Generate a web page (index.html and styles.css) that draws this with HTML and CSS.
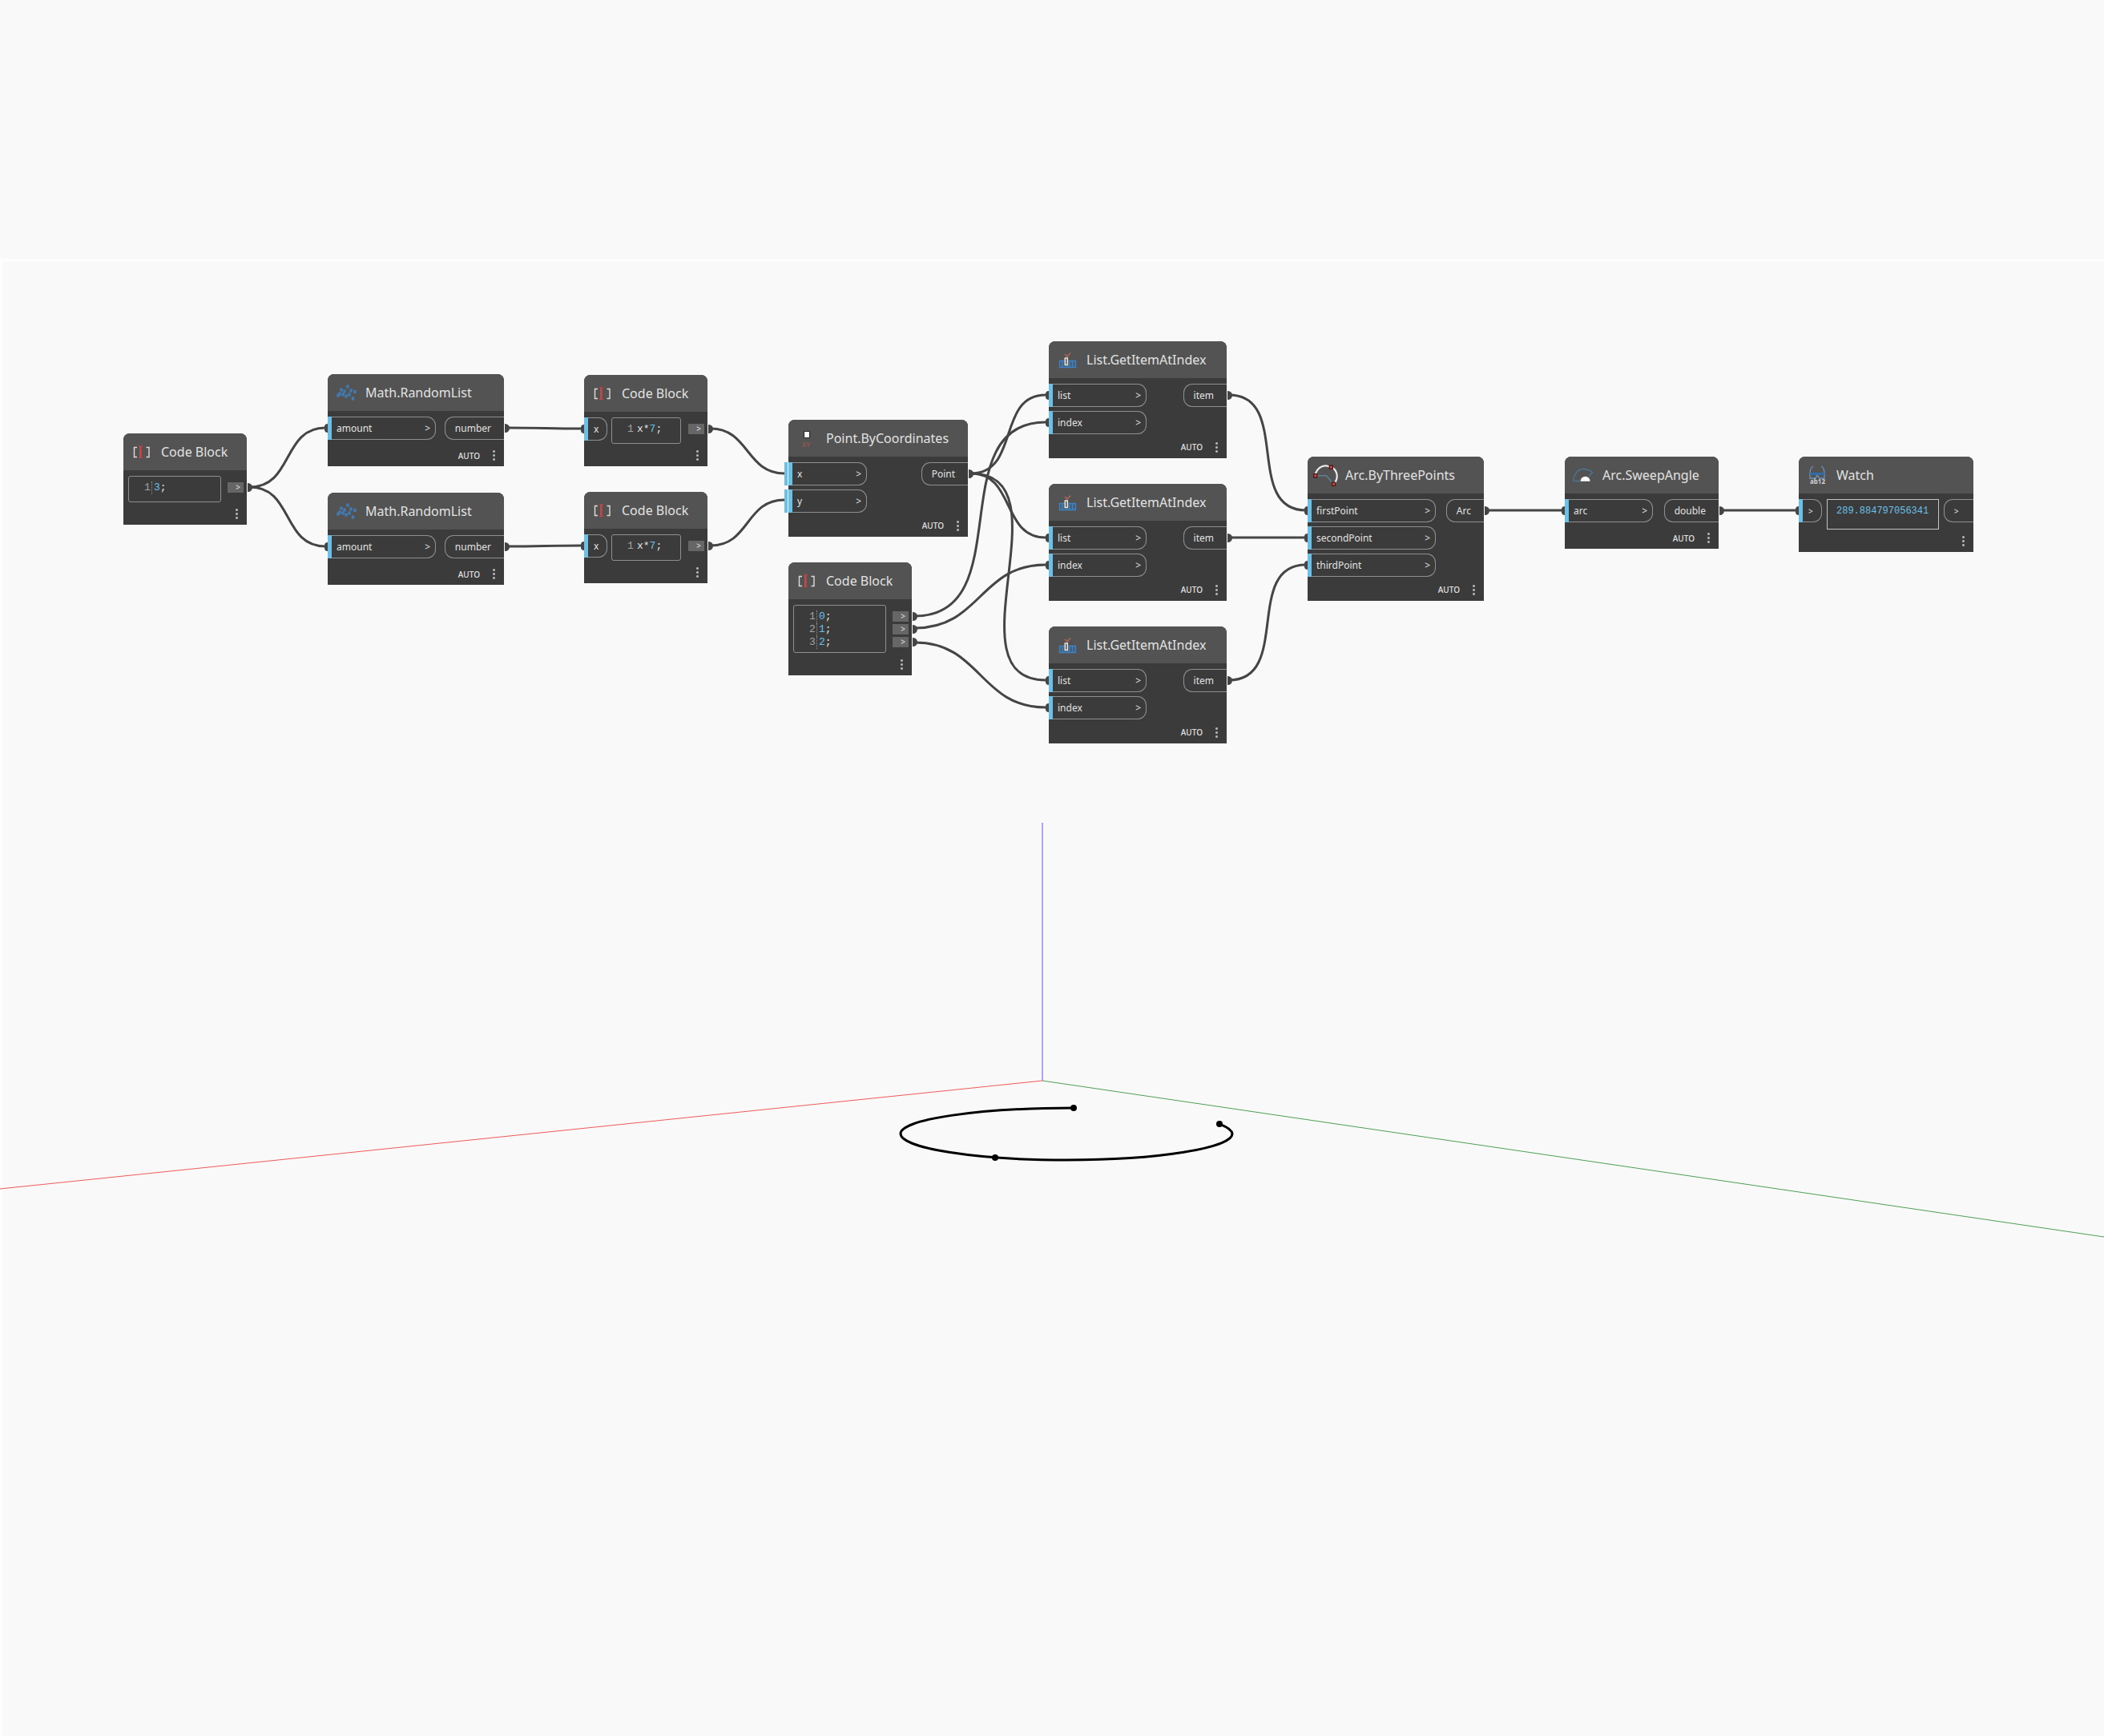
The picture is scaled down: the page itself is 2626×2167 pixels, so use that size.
FILE: index.html
```html
<!DOCTYPE html>
<html lang="en">
<head>
<meta charset="utf-8">
<title>Arc.SweepAngle graph</title>
<link rel="stylesheet" href="styles.css">
</head>
<body>
<svg class="symbols" aria-hidden="true">
  <symbol id="i-code" viewBox="0 0 32 32">
    <path d="M10 10.500H6.500v12H10M21.500 10.500h3.500v12h-3.500" fill="none" stroke="#dcdcdc" stroke-width="1.400"/>
    <path d="M11.500 8.700h5.500M11.500 23.500h5.500" stroke="#b84444" stroke-width="1"/>
    <path d="M14.300 9v14.500" stroke="#d04545" stroke-width="2.400"/>
  </symbol>
  <symbol id="i-random" viewBox="0 0 32 32">
    <path d="M17 7h2v3h-2zM9 11h2v3H9zM13 13h2v3h-2zM5 18h2v3H5zM7 16h2v3H7zM11 17h2v3h-2zM15 19h2v3h-2zM19 17h2v3h-2zM21 12h2v3h-2zM26 13.500h2v3h-2zM23.500 22h2v3h-2z" fill="#46627e" stroke="#3f83c4" stroke-width="1.200"/>
  </symbol>
  <symbol id="i-list" viewBox="0 0 32 32">
    <path d="M6.500 17.500h20v8h-20zM10 17.500v8M18.500 17.500v8M22.500 17.500v8" fill="#44607c" stroke="#3f83c4" stroke-width="1.300"/>
    <path d="M13.300 14h3v8.500h-3z" fill="#535353" stroke="#ece4d8" stroke-width="1.500"/>
    <path d="M13 9l3 3 4-4.500" fill="none" stroke="#b0645f" stroke-width="1.600"/>
  </symbol>
  <symbol id="i-arc3" viewBox="0 0 32 32">
    <path d="M2.500 16.500C4 8 11 3.500 17 4.500l5 1.500C30 9 32.500 19 26 27" fill="none" stroke="#ececec" stroke-width="2.200"/>
    <path d="M2.500 16.700h14L25 27" fill="none" stroke="#5d8193" stroke-width="1.500"/>
    <path d="M.7 14.700h4v4h-4zM20.300 4.300h4v4h-4zM23.500 25.300h4v4h-4z" fill="#c45a5a" stroke="#5c1515" stroke-width="1.400"/>
  </symbol>
  <symbol id="i-sweep" viewBox="0 0 32 32">
    <path d="M3.500 23.500C4 14 10 8.500 16 8.500c5 0 8 1.500 11.500 4L23 18M3.500 23.500h9" fill="none" stroke="#4b7396" stroke-width="1.500"/>
    <path d="M12.600 23.800a6 6 0 0 1 12 0z" fill="#fff"/>
  </symbol>
</svg>

<main class="workspace">
  <svg class="scene" role="img" aria-label="3D preview: arc through three points">
    <path class="axis-z" d="M1301 1027V1349"/>
    <path class="axis-x" d="M0 1484L1301 1349"/>
    <path class="axis-y" d="M1301 1349L2626 1544"/>
    <path class="arc" d="M1340 1383A216 32 0 0 0 1124 1415A207 33 0 0 0 1331 1448A207 33 0 0 0 1538 1415A207 33 0 0 0 1522 1403"/>
    <circle cx="1340" cy="1383" r="4"/><circle cx="1242" cy="1445" r="4"/><circle cx="1522" cy="1403" r="4"/>
  </svg>
  <svg class="wires" aria-hidden="true">
    <path d="M312 608C366 608 352 534 406 534"/>
    <path d="M312 608C366 608 352 682 406 682"/>
    <path d="M633 534C675 534 685 535 727 535"/>
    <path d="M633 682C675 682 685 681 727 681"/>
    <path d="M887 535C935 535 931 591 979 591"/>
    <path d="M887 681C936 681 930 624 979 624"/>
    <path d="M1212 591C1273 591 1244 493 1305 493"/>
    <path d="M1212 591C1267 591 1250 671 1305 671"/>
    <path d="M1212 591C1335 591 1182 849 1305 849"/>
    <path d="M1142 769C1273 769 1174 527 1305 527"/>
    <path d="M1142 784C1224 784 1223 705 1305 705"/>
    <path d="M1142 802C1224 802 1223 883 1305 883"/>
    <path d="M1534 493C1612 493 1552 637 1630 637"/>
    <path d="M1534 671H1630"/>
    <path d="M1534 849C1612 849 1552 705 1630 705"/>
    <path d="M1856 637H1950"/>
    <path d="M2148 637H2243"/>
  </svg>

  <article class="node code" style="left:154px;top:541px;width:154px">
    <header><svg><use href="#i-code"/></svg><h2>Code Block</h2></header>
    <div class="body">
      <pre class="editor ruled"><code><i>1</i><span><b>3</b>;</span></code></pre>
      <div class="outs"><button class="tag wired">&gt;</button></div>
    </div>
    <footer><button class="menu" aria-label="Node menu"></button></footer>
  </article>

  <article class="node" style="left:409px;top:467px;width:220px">
    <header><svg><use href="#i-random"/></svg><h2>Math.RandomList</h2></header>
    <div class="body">
      <div class="ins wide"><div class="in wired">amount<span>&gt;</span></div></div>
      <div class="out wired">number</div>
    </div>
    <footer><span>AUTO</span><button class="menu" aria-label="Node menu"></button></footer>
  </article>

  <article class="node" style="left:409px;top:615px;width:220px">
    <header><svg><use href="#i-random"/></svg><h2>Math.RandomList</h2></header>
    <div class="body">
      <div class="ins wide"><div class="in wired">amount<span>&gt;</span></div></div>
      <div class="out wired">number</div>
    </div>
    <footer><span>AUTO</span><button class="menu" aria-label="Node menu"></button></footer>
  </article>

  <article class="node code" style="left:729px;top:468px;width:154px">
    <header><svg><use href="#i-code"/></svg><h2>Code Block</h2></header>
    <div class="body">
      <div class="ins"><div class="in mini wired">x</div></div>
      <pre class="editor"><code><i>1</i><span>x*<b>7</b>;</span></code></pre>
      <div class="outs"><button class="tag wired">&gt;</button></div>
    </div>
    <footer><button class="menu" aria-label="Node menu"></button></footer>
  </article>

  <article class="node code" style="left:729px;top:614px;width:154px">
    <header><svg><use href="#i-code"/></svg><h2>Code Block</h2></header>
    <div class="body">
      <div class="ins"><div class="in mini wired">x</div></div>
      <pre class="editor"><code><i>1</i><span>x*<b>7</b>;</span></code></pre>
      <div class="outs"><button class="tag wired">&gt;</button></div>
    </div>
    <footer><button class="menu" aria-label="Node menu"></button></footer>
  </article>

  <article class="node multi" style="left:984px;top:524px;width:224px">
    <header>
      <svg viewBox="0 0 32 32" aria-hidden="true">
        <path d="M12.500 7.500h7v8h-7z" fill="#fff" stroke="#2b2b2b" stroke-width="1.200"/>
        <text x="10" y="27" class="icon-xy">XY</text>
      </svg>
      <h2>Point.ByCoordinates</h2>
    </header>
    <div class="body">
      <div class="ins narrow"><div class="in default">x<span>&gt;</span></div><div class="in default">y<span>&gt;</span></div></div>
      <div class="out wired">Point</div>
    </div>
    <footer><span>AUTO</span><button class="menu" aria-label="Node menu"></button></footer>
  </article>

  <article class="node code" style="left:984px;top:702px;width:154px">
    <header><svg><use href="#i-code"/></svg><h2>Code Block</h2></header>
    <div class="body">
      <pre class="editor ruled"><code><i>1</i><span><b>0</b>;</span><i>2</i><span><b>1</b>;</span><i>3</i><span><b>2</b>;</span></code></pre>
      <div class="outs"><button class="tag wired">&gt;</button><button class="tag wired">&gt;</button><button class="tag wired">&gt;</button></div>
    </div>
    <footer><button class="menu" aria-label="Node menu"></button></footer>
  </article>

  <article class="node multi" style="left:1309px;top:426px;width:222px">
    <header><svg><use href="#i-list"/></svg><h2>List.GetItemAtIndex</h2></header>
    <div class="body">
      <div class="ins medium"><div class="in wired">list<span>&gt;</span></div><div class="in wired">index<span>&gt;</span></div></div>
      <div class="out wired">item</div>
    </div>
    <footer><span>AUTO</span><button class="menu" aria-label="Node menu"></button></footer>
  </article>

  <article class="node multi" style="left:1309px;top:604px;width:222px">
    <header><svg><use href="#i-list"/></svg><h2>List.GetItemAtIndex</h2></header>
    <div class="body">
      <div class="ins medium"><div class="in wired">list<span>&gt;</span></div><div class="in wired">index<span>&gt;</span></div></div>
      <div class="out wired">item</div>
    </div>
    <footer><span>AUTO</span><button class="menu" aria-label="Node menu"></button></footer>
  </article>

  <article class="node multi" style="left:1309px;top:782px;width:222px">
    <header><svg><use href="#i-list"/></svg><h2>List.GetItemAtIndex</h2></header>
    <div class="body">
      <div class="ins medium"><div class="in wired">list<span>&gt;</span></div><div class="in wired">index<span>&gt;</span></div></div>
      <div class="out wired">item</div>
    </div>
    <footer><span>AUTO</span><button class="menu" aria-label="Node menu"></button></footer>
  </article>

  <article class="node multi" style="left:1632px;top:570px;width:220px">
    <header><svg><use href="#i-arc3"/></svg><h2>Arc.ByThreePoints</h2></header>
    <div class="body">
      <div class="ins widest"><div class="in wired">firstPoint<span>&gt;</span></div><div class="in wired">secondPoint<span>&gt;</span></div><div class="in wired">thirdPoint<span>&gt;</span></div></div>
      <div class="out wired">Arc</div>
    </div>
    <footer><span>AUTO</span><button class="menu" aria-label="Node menu"></button></footer>
  </article>

  <article class="node" style="left:1953px;top:570px;width:192px">
    <header><svg><use href="#i-sweep"/></svg><h2>Arc.SweepAngle</h2></header>
    <div class="body">
      <div class="ins short"><div class="in wired">arc<span>&gt;</span></div></div>
      <div class="out wired">double</div>
    </div>
    <footer><span>AUTO</span><button class="menu" aria-label="Node menu"></button></footer>
  </article>

  <article class="node watch" style="left:2245px;top:570px;width:218px">
    <header>
      <svg viewBox="0 0 32 32" aria-hidden="true">
        <path d="M11 5c-2 1-4 5-4 10v5h7l2-4 3 4h6v-5c0-5-1-9-4-10" fill="none" stroke="#6f94b5" stroke-width="1.300"/>
        <path d="M7 13h18v3H7z" fill="#2f6ea8"/>
        <text x="7" y="27" class="icon-ab">ab12</text>
      </svg>
      <h2>Watch</h2>
    </header>
    <div class="body">
      <div class="ins"><div class="in mini wired"><span>&gt;</span></div></div>
      <output>289.884797056341</output>
      <div class="out"><span>&gt;</span></div>
    </div>
    <footer><button class="menu" aria-label="Node menu"></button></footer>
  </article>
</main>
</body>
</html>
```

FILE: styles.css
```css
* { box-sizing: border-box; }

body {
  margin: 0;
  min-height: 100vh;
  padding-top: 323px;
  background: #f9f9f9;
  font-family: "Noto Sans", "Open Sans", sans-serif;
  color: #e2e2e2;
}

.symbols { position: absolute; width: 0; height: 0; }
.icon-xy { font: bold 8px "Noto Sans", sans-serif; fill: #8f5454; }
.icon-ab { font: bold 8px "Noto Sans", sans-serif; fill: #d0d0d0; }

.workspace {
  min-height: calc(100vh - 323px);
  border-top: 4px solid #fdfdfd;
  border-left: 3px solid #fdfdfd;
}

.scene, .wires {
  position: absolute;
  top: 0;
  left: 0;
  width: 100%;
  height: 100%;
}
.scene path { fill: none; }
.scene .axis-x { stroke: #f05a5a; stroke-width: 1; }
.scene .axis-y { stroke: #4f9f55; stroke-width: 1; }
.scene .axis-z { stroke: #aba6f5; stroke-width: 2; }
.scene .arc { stroke: #000; stroke-width: 3; }
.wires path { fill: none; stroke: #454545; stroke-width: 3; }

.node {
  position: absolute;
  background: #3b3b3b;
  border-radius: 8px 8px 0 0;
}
.node header {
  display: flex;
  align-items: center;
  gap: 8px;
  height: 46px;
  padding-left: 7px;
  background: #535353;
  border-radius: 8px 8px 0 0;
}
.node header svg { width: 32px; height: 32px; flex: none; }
.node h2 {
  margin: 0;
  font-size: 16px;
  font-weight: 400;
  line-height: 24px;
  white-space: nowrap;
}

.body {
  display: flex;
  justify-content: space-between;
  align-items: flex-start;
  padding-top: 7px;
}
.ins { display: grid; gap: 5px; }
.wide { width: 135px; }
.widest { width: 160px; }
.medium { width: 122px; }
.short { width: 110px; }
.narrow { width: 98px; }

.in, .out {
  position: relative;
  display: flex;
  align-items: center;
  height: 29px;
  border: 1px solid #8f8f8f;
  font-size: 12px;
  line-height: 16px;
}
.in {
  justify-content: space-between;
  padding: 0 6px;
  border-left: 5px solid #6ac0e7;
  border-radius: 0 11px 11px 0;
}
.in::after, .default::before {
  content: "";
  position: absolute;
  top: -1px;
  bottom: -1px;
  left: -5px;
  width: 5px;
  background: #6ac0e7;
}
.default::before { left: -10px; width: 4px; }
.out {
  padding: 0 16px 0 12px;
  border-right: 0;
  border-radius: 11px 0 0 11px;
}
.mini { width: 29px; padding: 0 7px; }

.in.wired::before, .out.wired::after, .tag.wired::after {
  content: "";
  position: absolute;
  top: 8px;
  width: 4px;
  height: 11px;
  background: #454545;
}
.in.wired::before { left: -9px; border-radius: 6px 0 0 6px; }
.out.wired::after { right: -7px; width: 6px; border-radius: 0 6px 6px 0; }
.tag.wired::after { top: 1px; right: -11px; width: 6px; border-radius: 0 6px 6px 0; }

.editor {
  flex: 1;
  min-height: 33px;
  margin: 0 9px 0 5px;
  padding: 6px 0 4px 19px;
  border: 1px solid #8f8f8f;
  border-radius: 3px;
  font: 13px/16px "Liberation Mono", monospace;
}
.editor.ruled { margin: 0 8px 0 6px; }
.editor code {
  display: grid;
  grid-template-columns: 8px 1fr;
  column-gap: 4px;
  font: inherit;
}
.editor i { font-style: normal; color: #a3a3a3; }
.editor b { font-weight: 400; color: #6ac0e7; }
.ruled span { position: relative; }
.ruled span::before {
  content: "";
  position: absolute;
  top: 0;
  bottom: 0;
  left: -3px;
  border-left: 1px dotted #8f8f8f;
}
.outs { display: grid; gap: 3px; padding: 8px 4px 0 0; }
.tag {
  position: relative;
  width: 20px;
  height: 13px;
  padding: 0 0 0 6px;
  border: 0;
  background: #666;
  color: #e2e2e2;
  font: 10px/13px "Noto Sans", sans-serif;
}

footer {
  display: flex;
  justify-content: flex-end;
  align-items: center;
  gap: 15px;
  height: 33px;
  padding: 6px 10px 0 0;
  font-size: 10px;
  font-weight: 500;
  line-height: 14px;
}
.multi footer { height: 30px; padding-top: 2px; }
.code footer { height: 28px; padding: 0 10px 0 0; }
.menu {
  width: 5px;
  height: 15px;
  padding: 0;
  border: 0;
  background: radial-gradient(circle, #b0b0b0 1px, transparent 2px) 0 0 / 5px 5px;
}

.watch .body { justify-content: flex-start; gap: 6px; }
.watch output {
  width: 140px;
  height: 38px;
  padding-left: 11px;
  border: 1px solid #c4c4c4;
  color: #6ac0e7;
  font: 12px/28px "Liberation Mono", monospace;
}
.watch .out { flex: 1; }
.watch .in, .watch .out { font-size: 10px; }
.watch footer { height: 28px; padding: 0 10px 0 0; }
```
